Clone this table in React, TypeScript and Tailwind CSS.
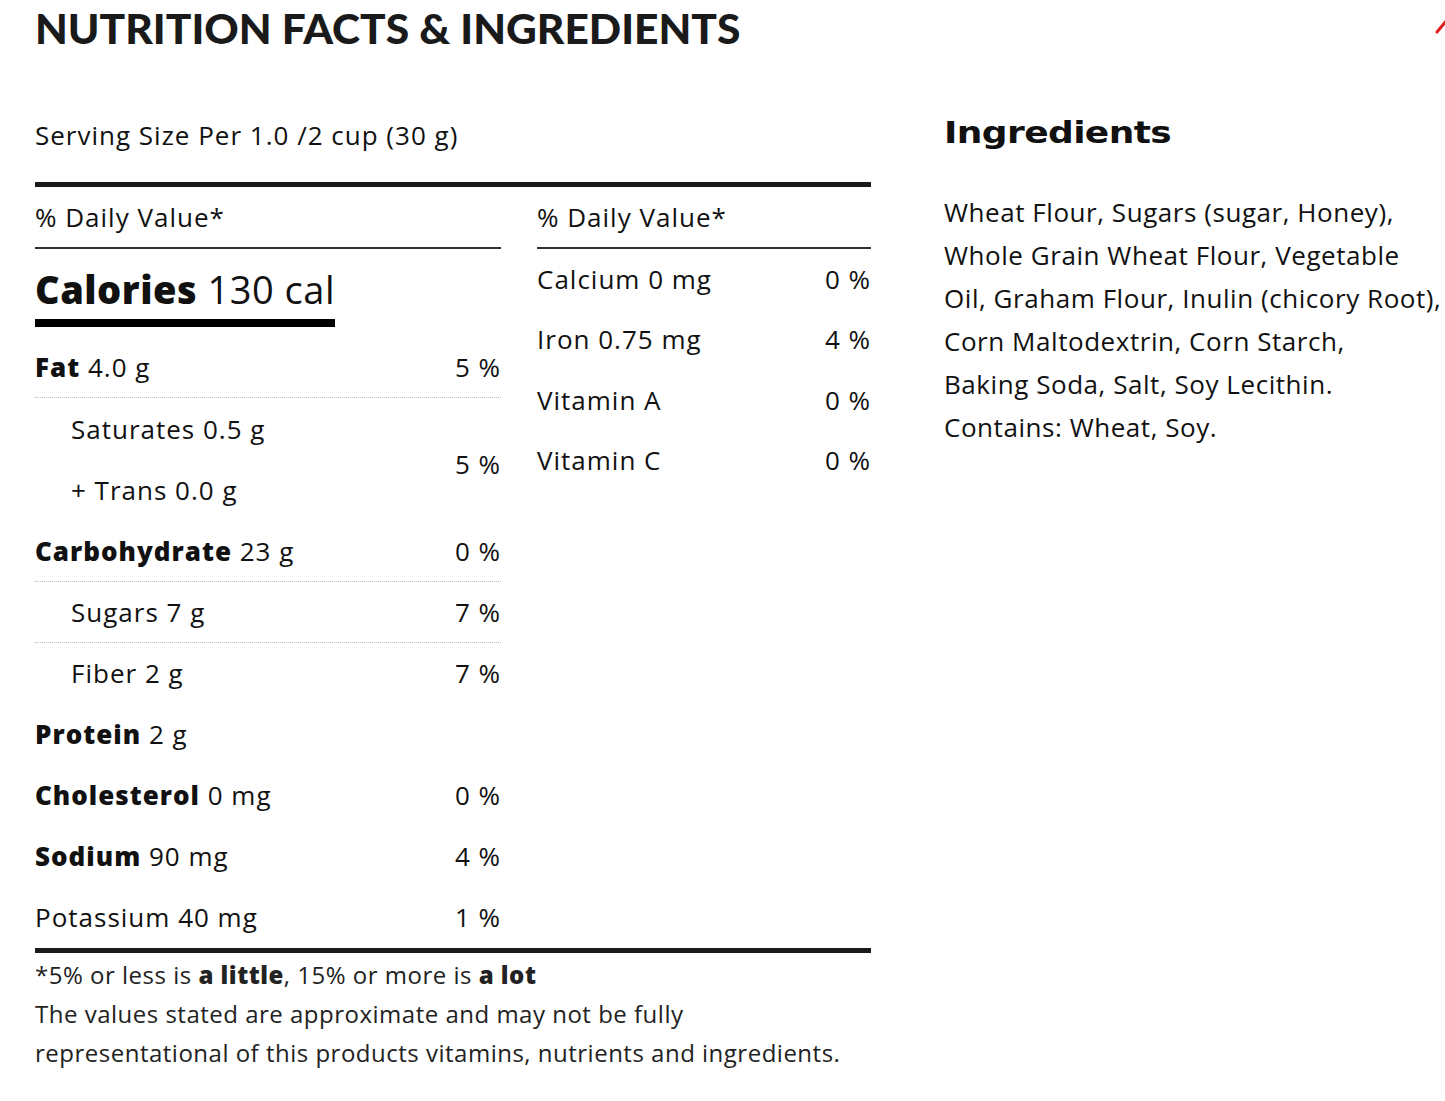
import React from "react";

type Row = { label: string; bold?: boolean; amount: string; pct?: string; indent?: boolean; dotted?: boolean };

const NutRow = ({ r }: { r: Row }) => (
  <div
    className={
      "flex h-[61px] items-center justify-between " +
      (r.dotted ? "border-b border-dotted border-[#bdbdbd]" : "")
    }
  >
    <span className={r.indent ? "pl-[36px]" : ""}>
      {r.bold ? <b className="font-extrabold">{r.label}</b> : r.label} {r.amount}
    </span>
    <span className="whitespace-nowrap">{r.pct}</span>
  </div>
);

const vitamins = [
  { label: "Calcium 0 mg", pct: "0 %" },
  { label: "Iron 0.75 mg", pct: "4 %" },
  { label: "Vitamin A", pct: "0 %" },
  { label: "Vitamin C", pct: "0 %" },
];

export default function App() {
  const lower: Row[] = [
    { label: "Carbohydrate", bold: true, amount: "23 g", pct: "0 %", dotted: true },
    { label: "Sugars", amount: "7 g", pct: "7 %", indent: true, dotted: true },
    { label: "Fiber", amount: "2 g", pct: "7 %", indent: true },
    { label: "Protein", bold: true, amount: "2 g" },
    { label: "Cholesterol", bold: true, amount: "0 mg", pct: "0 %" },
    { label: "Sodium", bold: true, amount: "90 mg", pct: "4 %" },
    { label: "Potassium", amount: "40 mg", pct: "1 %" },
  ];

  return (
    <div className="relative min-h-[1101px] w-full overflow-hidden bg-white pl-[35px] font-['Open_Sans',sans-serif] text-[#111]">
      {/* close icon, mostly off screen */}
      <svg className="absolute right-0 top-[20px] h-[14px] w-[10px]" viewBox="0 0 10 14">
        <line x1="2" y1="12" x2="12" y2="0" stroke="#e11d1d" strokeWidth="3" strokeLinecap="round" />
      </svg>

      <h2 className="pt-[4px] font-['Lato',sans-serif] text-[42.5px] font-black leading-[48px] text-[#1a1a1a]">
        NUTRITION FACTS &amp; INGREDIENTS
      </h2>

      <div className="mt-[63px] flex gap-[73px]">
        <div className="w-[836px] shrink-0 text-[26px] tracking-[1px]">
          <p className="pb-[27px] leading-[40px]">Serving Size Per 1.0 /2 cup (30 g)</p>
          <div className="h-[5px] bg-[#1a1a1a]" />

          <div className="grid grid-cols-[466px_334px] gap-x-[36px]">
            <div>
              <div className="flex h-[62px] items-center border-b-2 border-[#333]">% Daily Value*</div>
              <div className="pt-[18px] pb-[10px]">
                <div className="inline-block border-b-[8px] border-black pb-[8px] text-[38px] leading-[44px] tracking-[0.5px]">
                  <b className="font-extrabold">Calories</b> 130 cal
                </div>
              </div>
              <NutRow r={{ label: "Fat", bold: true, amount: "4.0 g", pct: "5 %", dotted: true }} />
              <div className="flex justify-between">
                <div>
                  <div className="flex h-[62px] items-center pl-[36px]">Saturates 0.5 g</div>
                  <div className="flex h-[61px] items-center pl-[36px]">+ Trans 0.0 g</div>
                </div>
                <div className="flex items-center pt-[10px]">5 %</div>
              </div>
              {lower.map((r) => (
                <NutRow key={r.label} r={r} />
              ))}
            </div>

            <div>
              <div className="flex h-[62px] items-center border-b-2 border-[#333]">% Daily Value*</div>
              {vitamins.map((v) => (
                <div key={v.label} className="flex h-[60.5px] items-center justify-between">
                  <span>{v.label}</span>
                  <span>{v.pct}</span>
                </div>
              ))}
            </div>
          </div>

          <div className="h-[5px] bg-[#1a1a1a]" />
          <div className="pt-[2px] text-[24px] leading-[39px] tracking-[0.5px] text-[#222]">
            <p>
              *5% or less is <b className="font-extrabold">a little</b>, 15% or more is{" "}
              <b className="font-extrabold">a lot</b>
            </p>
            <p>The values stated are approximate and may not be fully</p>
            <p>representational of this products vitamins, nutrients and ingredients.</p>
          </div>
        </div>

        <div className="w-[500px] shrink-0">
          <h3 className="inline-block origin-left scale-x-[1.2] font-['DejaVu_Sans',sans-serif] text-[30px] font-bold leading-[36px] tracking-[-0.5px]">
            Ingredients
          </h3>
          <p className="mt-[40px] text-[26px] leading-[43px] tracking-[0.55px]">
            Wheat Flour, Sugars (sugar, Honey),
            <br />
            Whole Grain Wheat Flour, Vegetable
            <br />
            Oil, Graham Flour, Inulin (chicory Root),
            <br />
            Corn Maltodextrin, Corn Starch,
            <br />
            Baking Soda, Salt, Soy Lecithin.
            <br />
            Contains: Wheat, Soy.
          </p>
        </div>
      </div>
    </div>
  );
}
